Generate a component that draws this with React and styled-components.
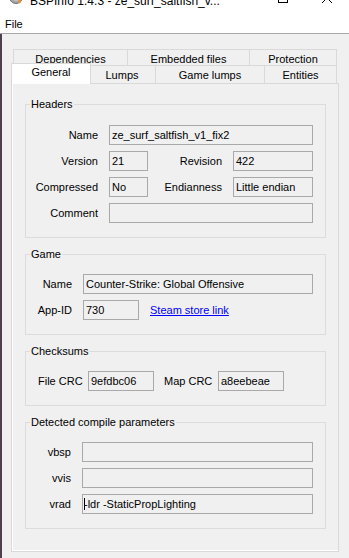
import React from "react";
import styled, { createGlobalStyle, css } from "styled-components";

const Global = createGlobalStyle`
  html, body { margin: 0; padding: 0; background: #f0f0f0; }
  body {
    font-family: "Liberation Sans", Arial, sans-serif;
    font-size: 11px;
    color: #000;
    overflow: hidden;
  }
  * { box-sizing: border-box; }
`;

const Window = styled.div`
  width: 349px;
  height: 558px;
  display: flex;
  flex-direction: column;
  background: #fff;
  overflow: hidden;
`;

const TitleBar = styled.div`
  height: 11px;
  flex: none;
  display: flex;
  align-items: flex-start;
  overflow: hidden;
  background: #fff;
`;

const AppIcon = styled.svg`
  flex: none;
  margin: -11px 0 0 8px;
`;

const TitleText = styled.div`
  margin: -6px 0 0 6px;
  font-size: 12px;
  line-height: 14px;
  white-space: nowrap;
`;

const Spacer = styled.div`
  flex: 1;
`;

const CaptionGlyph = styled.svg`
  flex: none;
  margin-top: -7px;
  margin-right: ${(p) => p.$gap}px;
`;

const MenuBar = styled.div`
  height: 23px;
  flex: none;
  padding: 4px 0 0 5px;
  line-height: 18px;
  background: #fff;
  border-bottom: 1px solid #a8a8a8;
`;

const Body = styled.div`
  flex: 1;
  background: #f0f0f0;
  border-left: 2px solid #4f4050;
  padding: 15px 0 0 9px;
`;

const TabStrip = styled.div`
  width: 328px;
`;

const TabRow = styled.div`
  display: flex;
  align-items: flex-end;
  height: ${(p) => p.$h}px;
  padding-left: 2px;
`;

const Tab = styled.div`
  flex: none;
  width: ${(p) => p.$w}px;
  height: ${(p) => p.$h}px;
  margin-left: -1px;
  &:first-child { margin-left: 0; }
  border: 1px solid #d9d9d9;
  border-bottom: none;
  background: #f0f0f0;
  text-align: center;
  padding-top: 1px;
  line-height: 16px;
  white-space: nowrap;
  overflow: hidden;
  ${(p) =>
    p.$active &&
    css`
      background: #fff;
      height: 21px;
      margin: 0 -2px -1px -2px;
      &:first-child { margin-left: -2px; }
      padding-top: 0;
      position: relative;
      z-index: 1;
    `}
`;

const Panel = styled.div`
  width: 328px;
  height: 469px;
  border: 1px solid #d9d9d9;
  box-shadow: inset 1px -1px 0 #fff;
  padding: 13px 12px 0 13px;
  display: flex;
  flex-direction: column;
  gap: 9px;
`;

const Group = styled.fieldset`
  margin: 0;
  min-width: 0;
  padding: ${(p) => p.$pt ?? 13}px 12px 14px 0;
  border: 1px solid #dcdcdc;
`;

const Legend = styled.legend`
  margin-left: 4px;
  padding: 0 1px;
  line-height: 14px;
  font-size: 11px;
`;

const FormGrid = styled.div`
  display: grid;
  grid-template-columns: ${(p) => p.$cols};
  grid-auto-rows: 20px;
  column-gap: ${(p) => p.$gap ?? 11}px;
  row-gap: 6px;
  align-items: center;
  padding-left: ${(p) => p.$pl ?? 0}px;
`;

const Label = styled.span`
  text-align: ${(p) => p.$align || "right"};
  white-space: nowrap;
`;

const Field = styled.div`
  height: 20px;
  border: 1px solid #a9a9a9;
  background: #f0f0f0;
  padding: 0 2px;
  line-height: 18px;
  white-space: nowrap;
  overflow: hidden;
  ${(p) => p.$span && `grid-column: ${p.$span};`}
`;

const Link = styled.span`
  color: #0000ff;
  text-decoration: underline;
  white-space: nowrap;
  cursor: pointer;
`;

const Caret = styled.span`
  display: inline-block;
  width: 1px;
  height: 12px;
  background: #000;
  vertical-align: middle;
  margin: -2px -1px 0 -1px;
`;

export default function App() {
  return (
    <>
      <Global />
      <Window>
        <TitleBar>
          <AppIcon width="16" height="16" viewBox="0 0 16 16">
            <circle cx="8" cy="8" r="6.5" fill="#a8a8a8" stroke="#6d6d6d" strokeWidth="1" />
            <circle cx="8" cy="8" r="3.5" fill="#dcdcdc" />
            <path d="M11 14 L15 6" stroke="#f08a24" strokeWidth="2" />
          </AppIcon>
          <TitleText>BSPInfo 1.4.3 - ze_surf_saltfish_v...</TitleText>
          <Spacer />
          <CaptionGlyph $gap={34} width="10" height="10" viewBox="0 0 10 10">
            <rect x="0.5" y="0.5" width="9" height="9" fill="none" stroke="#000" strokeWidth="1" />
          </CaptionGlyph>
          <CaptionGlyph $gap={17} width="10" height="10" viewBox="0 0 10 10">
            <path d="M0 0 L10 10 M10 0 L0 10" stroke="#000" strokeWidth="1" />
          </CaptionGlyph>
        </TitleBar>
        <MenuBar>File</MenuBar>
        <Body>
          <TabStrip>
            <TabRow $h={16}>
              <Tab $w={115} $h={16}>Dependencies</Tab>
              <Tab $w={123} $h={16}>Embedded files</Tab>
              <Tab $w={88} $h={16}>Protection</Tab>
            </TabRow>
            <TabRow $h={18}>
              <Tab $w={80} $h={18} $active>General</Tab>
              <Tab $w={68} $h={18}>Lumps</Tab>
              <Tab $w={110} $h={18}>Game lumps</Tab>
              <Tab $w={73} $h={18}>Entities</Tab>
            </TabRow>
          </TabStrip>
          <Panel>
            <Group $pt={14}>
              <Legend>Headers</Legend>
              <FormGrid $cols="72px 39px 63px 80px">
                <Label>Name</Label>
                <Field $span="2 / 5">ze_surf_saltfish_v1_fix2</Field>
                <Label>Version</Label>
                <Field>21</Field>
                <Label>Revision</Label>
                <Field>422</Field>
                <Label>Compressed</Label>
                <Field>No</Field>
                <Label>Endianness</Label>
                <Field>Little endian</Field>
                <Label>Comment</Label>
                <Field $span="2 / 5" />
              </FormGrid>
            </Group>
            <Group>
              <Legend>Game</Legend>
              <FormGrid $cols="46px 56px 1fr">
                <Label>Name</Label>
                <Field $span="2 / 4">Counter-Strike: Global Offensive</Field>
                <Label>App-ID</Label>
                <Field>730</Field>
                <Link>Steam store link</Link>
              </FormGrid>
            </Group>
            <Group>
              <Legend>Checksums</Legend>
              <FormGrid $cols="40px 66px 44px 66px" $gap={10} $pl={12}>
                <Label $align="left">File CRC</Label>
                <Field>9efdbc06</Field>
                <Label $align="left">Map CRC</Label>
                <Field>a8eebeae</Field>
              </FormGrid>
            </Group>
            <Group>
              <Legend>Detected compile parameters</Legend>
              <FormGrid $cols="45px 1fr">
                <Label>vbsp</Label>
                <Field />
                <Label>vvis</Label>
                <Field />
                <Label>vrad</Label>
                <Field>
                  <Caret />
                  -ldr -StaticPropLighting
                </Field>
              </FormGrid>
            </Group>
          </Panel>
        </Body>
      </Window>
    </>
  );
}
